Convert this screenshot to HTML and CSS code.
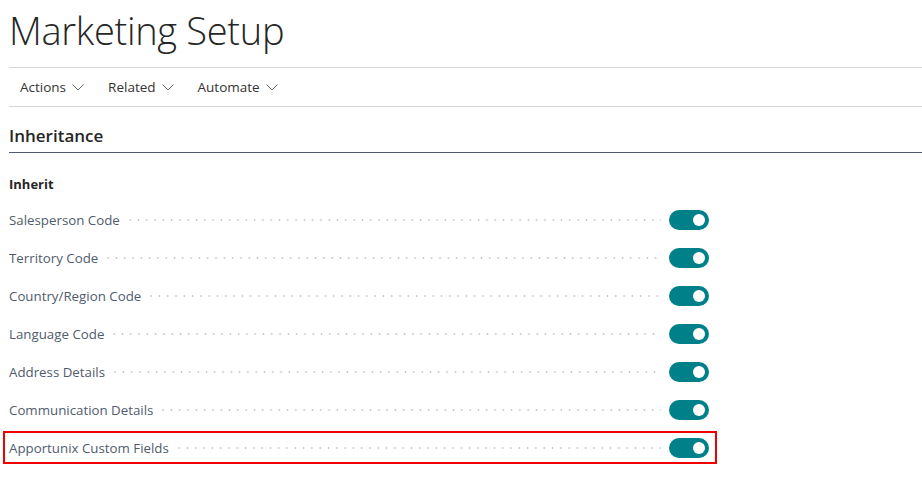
FILE: index.html
```html
<!DOCTYPE html>
<html lang="en">
<head>
<meta charset="utf-8">
<title>Marketing Setup</title>
<link rel="stylesheet" href="styles.css">
</head>
<body>
<div class="page">
  <h1 class="title">Marketing Setup</h1>
  <nav class="menu">
    <span class="menu-item">Actions<svg class="chev" width="12" height="7" viewBox="0 0 12 7"><polyline points="0.5,0.5 6,6 11.5,0.5" fill="none" stroke="#666" stroke-width="1"/></svg></span>
    <span class="menu-item">Related<svg class="chev" width="12" height="7" viewBox="0 0 12 7"><polyline points="0.5,0.5 6,6 11.5,0.5" fill="none" stroke="#666" stroke-width="1"/></svg></span>
    <span class="menu-item">Automate<svg class="chev" width="12" height="7" viewBox="0 0 12 7"><polyline points="0.5,0.5 6,6 11.5,0.5" fill="none" stroke="#666" stroke-width="1"/></svg></span>
  </nav>
  <section class="group">
    <h2 class="group-title">Inheritance</h2>
    <h3 class="sub-title">Inherit</h3>
    <div class="fields">
      <div class="row"><span class="label">Salesperson Code</span><span class="dots"></span><span class="toggle"><span class="knob"></span></span></div>
      <div class="row"><span class="label">Territory Code</span><span class="dots"></span><span class="toggle"><span class="knob"></span></span></div>
      <div class="row"><span class="label">Country/Region Code</span><span class="dots"></span><span class="toggle"><span class="knob"></span></span></div>
      <div class="row"><span class="label">Language Code</span><span class="dots"></span><span class="toggle"><span class="knob"></span></span></div>
      <div class="row"><span class="label">Address Details</span><span class="dots"></span><span class="toggle"><span class="knob"></span></span></div>
      <div class="row"><span class="label">Communication Details</span><span class="dots"></span><span class="toggle"><span class="knob"></span></span></div>
      <div class="row highlight"><span class="label">Apportunix Custom Fields</span><span class="dots"></span><span class="toggle"><span class="knob"></span></span></div>
    </div>
  </section>
</div>
</body>
</html>
```
FILE: styles.css
```css
* { box-sizing: border-box; }
html, body { margin: 0; padding: 0; background: #fff; }
body { font-family: "Open Sans", "Noto Sans", Arial, sans-serif; color: #212121; }
.page { padding-left: 9px; }

.title {
  margin: 0;
  height: 68px;
  padding-top: 6px;
  font-size: 38px;
  line-height: 48px;
  font-weight: 300;
  color: #262626;
  letter-spacing: -0.3px;
  border-bottom: 1px solid #d6d6d6;
}

.menu {
  display: flex;
  height: 39px;
  align-items: center;
  padding-left: 11px;
  border-bottom: 1px solid #d6d6d6;
}
.menu-item {
  display: flex;
  align-items: center;
  font-size: 13.5px;
  color: #333;
  margin-right: 24px;
}
.chev { margin-left: 6px; margin-top: 1px; }

.group-title {
  margin: 0;
  height: 46px;
  padding-top: 18px;
  font-size: 17px;
  line-height: 22px;
  font-weight: 600;
  color: #262626;
  border-bottom: 1px solid #505c6d;
}
.sub-title {
  margin: 0;
  padding-top: 22px;
  font-size: 13px;
  line-height: 18px;
  font-weight: 700;
  color: #262626;
}
.fields { padding-top: 8px; width: 700px; }
.row {
  position: relative;
  display: flex;
  align-items: center;
  height: 38px;
}
.label {
  font-size: 13.3px;
  color: #505c6d;
  white-space: nowrap;
  padding-right: 6px;
}
.dots {
  flex: 1;
  height: 2px;
  margin-right: 8px;
  background-image: radial-gradient(circle, #c8c8c8 0.9px, transparent 1.1px);
  background-size: 8.3px 2px;
  background-repeat: repeat-x;
}
.toggle {
  width: 40px;
  height: 20px;
  border-radius: 10px;
  background: #00818a;
  display: flex;
  align-items: center;
  justify-content: flex-end;
  padding-right: 4px;
  flex: none;
}
.knob {
  width: 12px;
  height: 12px;
  border-radius: 50%;
  background: #fff;
}
.highlight::after {
  content: "";
  position: absolute;
  left: -6px;
  right: -8px;
  top: 2px;
  bottom: 3px;
  border: 2px solid #f00000;
}
```
